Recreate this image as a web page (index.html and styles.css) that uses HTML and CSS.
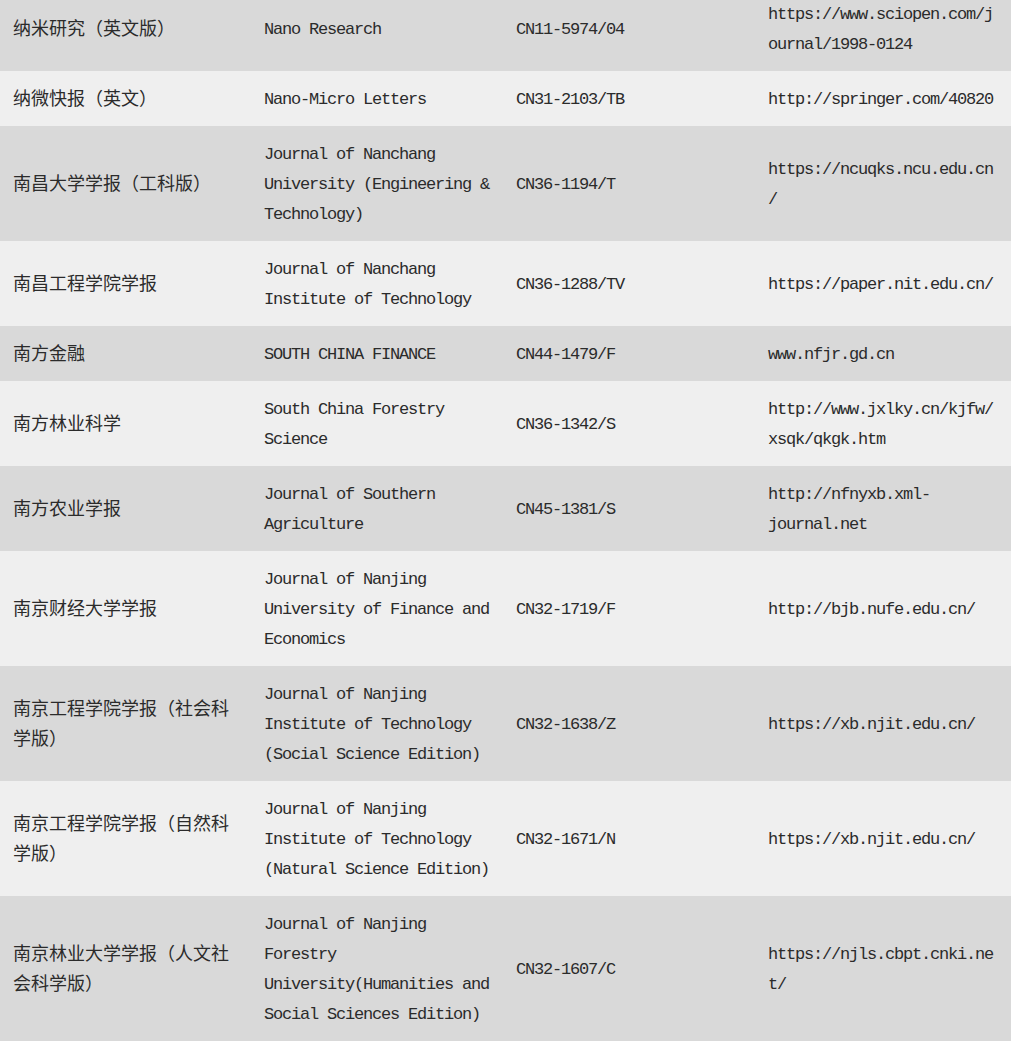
FILE: index.html
```html
<!DOCTYPE html>
<html lang="zh-CN">
<head>
<meta charset="utf-8">
<title>期刊列表</title>
<link rel="stylesheet" href="styles.css">
</head>
<body>
<table class="journals">
  <colgroup>
    <col class="c-name">
    <col class="c-en">
    <col class="c-cn">
    <col class="c-url">
  </colgroup>
  <tbody>
    <tr class="dark">
      <td class="zh">纳米研究（英文版）</td>
      <td class="lat">Nano Research</td>
      <td class="lat">CN11-5974/04</td>
      <td class="lat url">https://www.sciopen.com/journal/1998-0124</td>
    </tr>
    <tr class="light">
      <td class="zh">纳微快报（英文）</td>
      <td class="lat">Nano-Micro Letters</td>
      <td class="lat">CN31-2103/TB</td>
      <td class="lat url">http://springer.com/40820</td>
    </tr>
    <tr class="dark">
      <td class="zh">南昌大学学报（工科版）</td>
      <td class="lat">Journal of Nanchang University (Engineering &amp; Technology)</td>
      <td class="lat">CN36-1194/T</td>
      <td class="lat url">https://ncuqks.ncu.edu.cn/</td>
    </tr>
    <tr class="light">
      <td class="zh">南昌工程学院学报</td>
      <td class="lat">Journal of Nanchang Institute of Technology</td>
      <td class="lat">CN36-1288/TV</td>
      <td class="lat url">https://paper.nit.edu.cn/</td>
    </tr>
    <tr class="dark">
      <td class="zh">南方金融</td>
      <td class="lat">SOUTH CHINA FINANCE</td>
      <td class="lat">CN44-1479/F</td>
      <td class="lat url">www.nfjr.gd.cn</td>
    </tr>
    <tr class="light">
      <td class="zh">南方林业科学</td>
      <td class="lat">South China Forestry Science</td>
      <td class="lat">CN36-1342/S</td>
      <td class="lat url">http://www.jxlky.cn/kjfw/xsqk/qkgk.htm</td>
    </tr>
    <tr class="dark">
      <td class="zh">南方农业学报</td>
      <td class="lat">Journal of Southern Agriculture</td>
      <td class="lat">CN45-1381/S</td>
      <td class="lat url">http://nfnyxb.xml-journal.net</td>
    </tr>
    <tr class="light">
      <td class="zh">南京财经大学学报</td>
      <td class="lat">Journal of Nanjing University of Finance and Economics</td>
      <td class="lat">CN32-1719/F</td>
      <td class="lat url">http://bjb.nufe.edu.cn/</td>
    </tr>
    <tr class="dark">
      <td class="zh">南京工程学院学报（社会科学版）</td>
      <td class="lat">Journal of Nanjing Institute of Technology (Social Science Edition)</td>
      <td class="lat">CN32-1638/Z</td>
      <td class="lat url">https://xb.njit.edu.cn/</td>
    </tr>
    <tr class="light">
      <td class="zh">南京工程学院学报（自然科学版）</td>
      <td class="lat">Journal of Nanjing Institute of Technology (Natural Science Edition)</td>
      <td class="lat">CN32-1671/N</td>
      <td class="lat url">https://xb.njit.edu.cn/</td>
    </tr>
    <tr class="dark">
      <td class="zh">南京林业大学学报（人文社会科学版）</td>
      <td class="lat">Journal of Nanjing Forestry University(Humanities and Social Sciences Edition)</td>
      <td class="lat">CN32-1607/C</td>
      <td class="lat url">https://njls.cbpt.cnki.net/</td>
    </tr>
  </tbody>
</table>
</body>
</html>
```

FILE: styles.css
```css
html, body {
  margin: 0;
  padding: 0;
  background: #ffffff;
}

.journals {
  width: 1011px;
  margin-top: -14px;
  border-collapse: collapse;
  table-layout: fixed;
  color: #2b2b2b;
}

.c-name { width: 251px; }
.c-en { width: 252px; }
.c-cn { width: 252px; }
.c-url { width: 256px; }

.journals td {
  line-height: 30px;
  vertical-align: middle;
  text-align: left;
}

.dark { background: #d9d9d9; }
.light { background: #efefef; }

.journals td.zh {
  padding: 11px 13px 14px 13px;
  font-family: "Noto Sans CJK SC", "Noto Sans", sans-serif;
  font-size: 18px;
}

.journals td.lat {
  padding: 14px 13px 11px 13px;
  font-family: "Liberation Mono", "Noto Sans CJK SC", monospace;
  font-size: 17px;
  letter-spacing: -1.2px;
}

.url {
  overflow-wrap: anywhere;
}
```
